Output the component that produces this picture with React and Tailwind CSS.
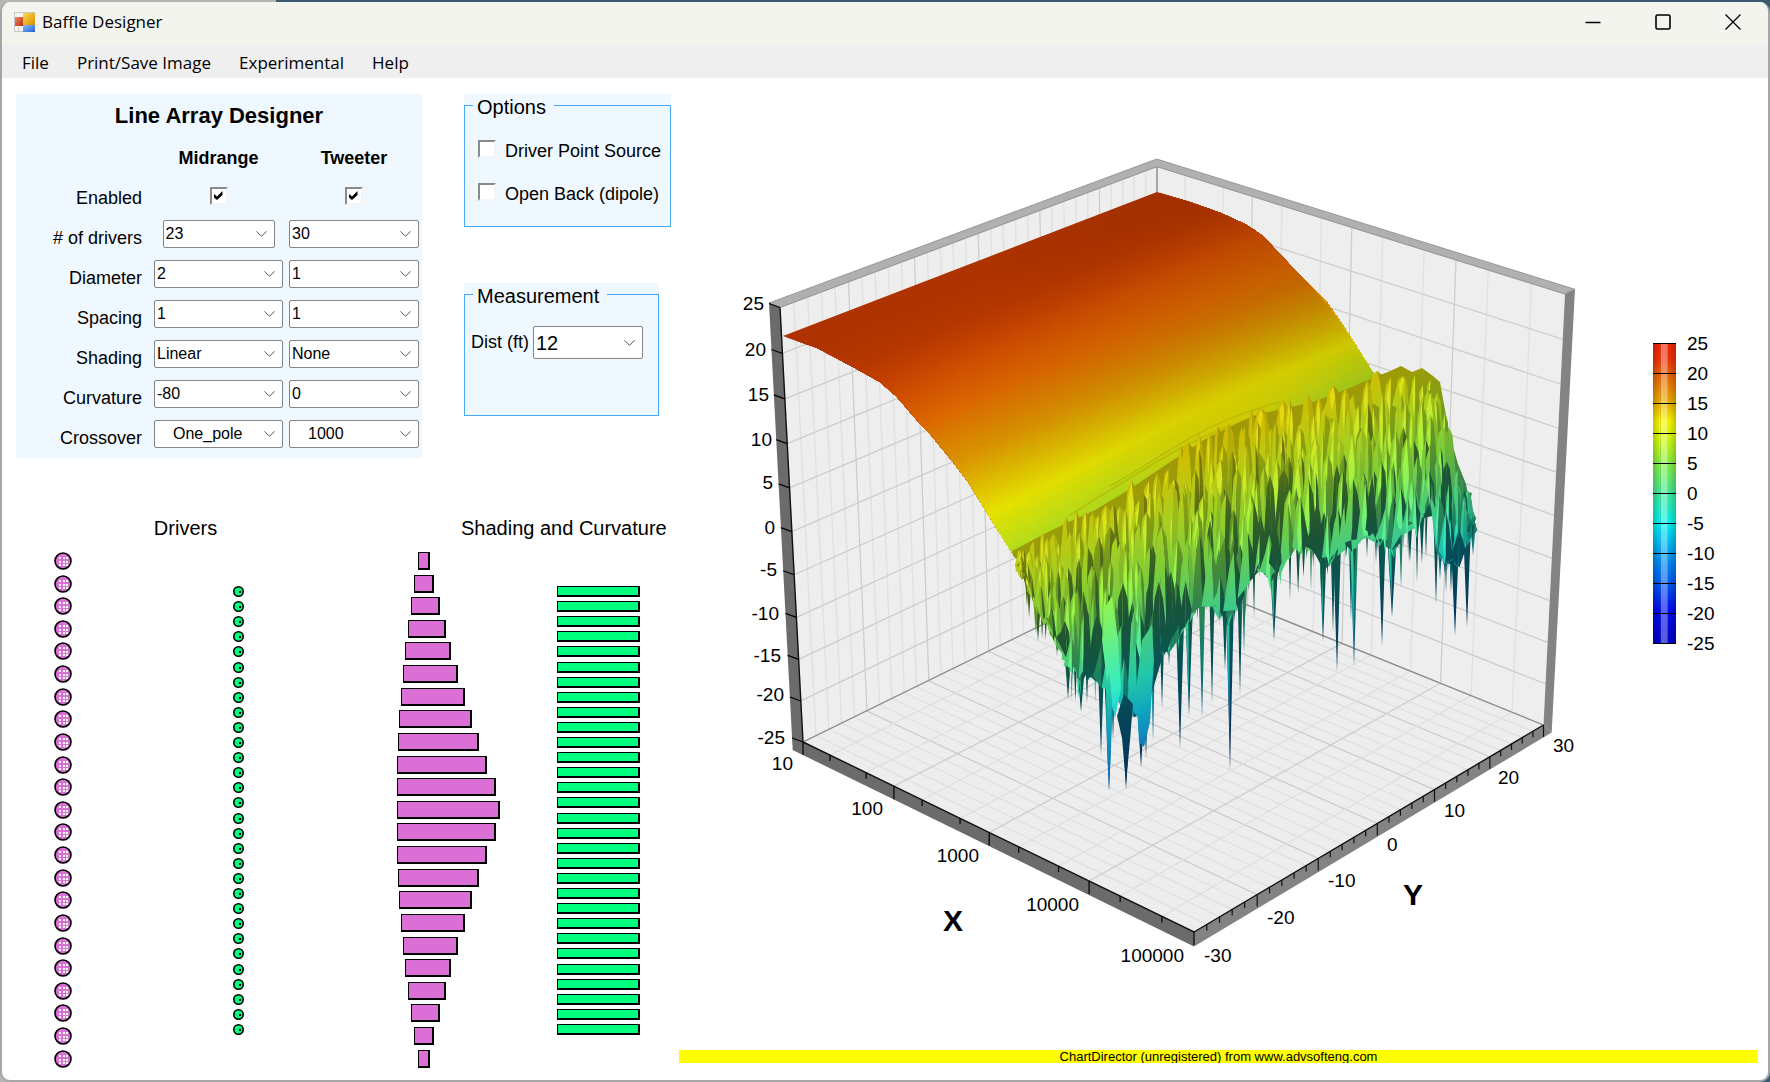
import React from "react";

const MENU = ["File", "Print/Save Image", "Experimental", "Help"];

const ROWS = [
  { label: "# of drivers", mid: "23", tweet: "30", narrow: true },
  { label: "Diameter", mid: "2", tweet: "1" },
  { label: "Spacing", mid: "1", tweet: "1" },
  { label: "Shading", mid: "Linear", tweet: "None" },
  { label: "Curvature", mid: "-80", tweet: "0" },
  { label: "Crossover", mid: "One_pole", tweet: "1000", indent: true },
];

/* ---------- form controls ---------- */

const Combo = ({ value, label, id, className = "w-full h-7 text-[16px]", pad = "pl-[2px]" }) => (
  <div className={`relative ${className}`}>
    <select
      id={id}
      aria-label={label}
      defaultValue={value}
      className={`block w-full h-full appearance-none rounded-[2px] border border-[#858585] bg-white text-black ${pad}`}
    >
      <option>{value}</option>
    </select>
    <svg
      className="pointer-events-none absolute right-2 top-1/2 -translate-y-1/2"
      width="11"
      height="7"
      viewBox="0 0 11 7"
      fill="none"
      stroke="#555"
    >
      <path d="M0.5 0.8 L5.5 5.8 L10.5 0.8" />
    </svg>
  </div>
);

const Check = ({ id, label, checked = false }) => (
  <span className="relative block h-[18px] w-[18px] shrink-0">
    <input
      id={id}
      type="checkbox"
      aria-label={label}
      defaultChecked={checked}
      className="peer block h-full w-full appearance-none border-2 border-t-[#8a8a8a] border-l-[#8a8a8a] border-r-[#f4f4f4] border-b-[#f4f4f4] bg-white"
    />
    <svg
      className="pointer-events-none absolute left-1 top-1 hidden peer-checked:block"
      width="9"
      height="9"
      viewBox="0 0 9 9"
    >
      <path d="M0 3 L3 5.5 L8.5 0 V4 L3 9 L0 6.5 Z" />
    </svg>
  </span>
);

const GroupBox = ({ title, className, children }) => (
  <div className={`bg-[#f0f8ff] ${className}`}>
    <fieldset className="h-full border border-[#49a8f7] px-2">
      <legend className="h-[22px] pl-1 pr-2 text-[20px] leading-[26px]">{title}</legend>
      {children}
    </fieldset>
  </div>
);

const LineArrayPanel = () => (
  <section className="w-[406px] bg-[#f0f8ff] text-[18px]">
    <h1 className="h-11 text-center text-[22px] leading-[44px] font-bold">Line Array Designer</h1>
    <div className="grid grid-cols-[132px_129px_130px] auto-rows-[40px] gap-x-[6px] items-center">
      <span />
      <h2 className="text-center font-bold">Midrange</h2>
      <h2 className="text-center font-bold">Tweeter</h2>
      <span className="pr-[6px] text-right">Enabled</span>
      <div className="flex justify-center pb-1">
        <Check label="Midrange enabled" checked />
      </div>
      <div className="flex justify-center pb-1">
        <Check label="Tweeter enabled" checked />
      </div>
      {ROWS.map((r) => (
        <React.Fragment key={r.label}>
          <span className="pr-[6px] text-right">{r.label}</span>
          <div className="flex justify-center pb-2">
            <Combo
              value={r.mid}
              label={`${r.label} midrange`}
              className={r.narrow ? "w-28 h-7 text-[16px]" : "w-full h-7 text-[16px]"}
              pad={r.indent ? "pl-[18px]" : "pl-[2px]"}
            />
          </div>
          <div className="pb-2">
            <Combo value={r.tweet} label={`${r.label} tweeter`} pad={r.indent ? "pl-[18px]" : "pl-[2px]"} />
          </div>
        </React.Fragment>
      ))}
    </div>
  </section>
);

/* ---------- driver layout drawing ---------- */

const HALF = [
  [418, 430], [414, 434], [411, 440], [408, 446], [405, 451], [403, 458],
  [401, 465], [399, 472], [398, 479], [397, 487], [397, 496],
];
const MID_BARS = [...HALF, [397, 500], ...[...HALF].reverse()];

const Bar = ({ x, y, w, h, fill }) => (
  <g shapeRendering="crispEdges">
    <rect x={x} y={y} width={w} height={h} fill="#000" />
    <rect x={x + 1} y={y + 1} width={w - 3} height={h - 3} fill={fill} />
  </g>
);

const DriverDrawing = () => (
  <svg viewBox="2 540 677 530" className="block w-full">
    {MID_BARS.map(([x0, x1], i) => {
      const y = Math.round(561 + i * 22.62);
      return (
        <g key={i}>
          <circle cx="63" cy={y} r="8" fill="#da70d6" stroke="#000" strokeWidth="1.6" />
          <g shapeRendering="crispEdges" fill="#fff">
            {[-4, 0, 3].map((dx) =>
              [-4, 0, 3].map((dy) => <rect key={`${dx},${dy}`} x={63 + dx} y={y + dy} width="2" height="2" />)
            )}
          </g>
          <Bar x={x0} y={y - 9} w={x1 - x0} h={18} fill="#da70d6" />
        </g>
      );
    })}
    {Array.from({ length: 30 }, (_, i) => {
      const y = Math.round(591 + i * 15.1);
      return (
        <g key={i}>
          <circle cx="238.5" cy={y + 0.5} r="4.7" fill="#00ff7f" stroke="#000" strokeWidth="1.6" />
          <rect x="239" y={y} width="2" height="2" />
          <Bar x={557} y={y - 5} w={83} h={11} fill="#00ff7f" />
        </g>
      );
    })}
  </svg>
);

/* ---------- surface chart ---------- */

// projective map of the unit square onto four screen points
const plane = ([x0, y0], [x1, y1], [x2, y2], [x3, y3]) => {
  const dx1 = x1 - x2, dx2 = x3 - x2, sx = x0 - x1 + x2 - x3;
  const dy1 = y1 - y2, dy2 = y3 - y2, sy = y0 - y1 + y2 - y3;
  const den = dx1 * dy2 - dx2 * dy1;
  const g = (sx * dy2 - dx2 * sy) / den;
  const h = (dx1 * sy - sx * dy1) / den;
  return (u, v) => {
    const w = g * u + h * v + 1;
    return [
      ((x1 - x0 + g * x1) * u + (x3 - x0 + h * x3) * v + x0) / w,
      ((y1 - y0 + g * y1) * u + (y3 - y0 + h * y3) * v + y0) / w,
    ];
  };
};

const LEFT = [803, 742];
const FRONT = [1194, 932];
const RIGHT = [1543.5, 725];
const BACK = [1157, 568.5];
const LEFT_TOP = [780, 307.5];
const BACK_TOP = [1157, 166.5];
const RIGHT_TOP = [1565, 294];

const floor = plane(LEFT, FRONT, RIGHT, BACK);
const leftWall = plane(LEFT, BACK, BACK_TOP, LEFT_TOP);
const rightWall = plane(BACK, RIGHT, RIGHT_TOP, BACK_TOP);

const X_TICKS = [0, 1, 2, 3].flatMap((d) => [
  { u: d / 4, major: true },
  { u: (d + 0.30103) / 4 },
  { u: (d + 0.69897) / 4 },
]);
const Y_TICKS = Array.from({ length: 31 }, (_, i) => ({ u: i / 30, major: i % 5 === 0 }));
const Z_TICKS = Array.from({ length: 11 }, (_, i) => ({ u: i / 10, major: true }));

const pts = (list) => list.map((p) => `${p[0].toFixed(1)},${p[1].toFixed(1)}`).join(" ");

const Seg = ({ a, b, stroke, width = 1 }) => (
  <line x1={a[0]} y1={a[1]} x2={b[0]} y2={b[1]} stroke={stroke} strokeWidth={width} />
);

const gridColor = (t) => (t.major ? "#cdcdcd" : "#e0e0e0");

const Walls = () => (
  <g>
    <polygon points={pts([LEFT, FRONT, RIGHT, BACK])} fill="#ededed" />
    <polygon points={pts([LEFT, BACK, BACK_TOP, LEFT_TOP])} fill="#eeeeee" />
    <polygon points={pts([BACK, RIGHT, RIGHT_TOP, BACK_TOP])} fill="#eeeeee" />
    {Y_TICKS.map((t, i) => (
      <g key={i}>
        <Seg a={leftWall(t.u, 0)} b={leftWall(t.u, 1)} stroke={gridColor(t)} width={1.3} />
        <Seg a={floor(0, t.u)} b={floor(1, t.u)} stroke={gridColor(t)} width={1.3} />
      </g>
    ))}
    {X_TICKS.map((t, i) => (
      <g key={i}>
        <Seg a={rightWall(t.u, 0)} b={rightWall(t.u, 1)} stroke={gridColor(t)} width={1.3} />
        <Seg a={floor(t.u, 0)} b={floor(t.u, 1)} stroke={gridColor(t)} width={1.3} />
      </g>
    ))}
    {Z_TICKS.map((t, i) => (
      <g key={i}>
        <Seg a={leftWall(0, t.u)} b={leftWall(1, t.u)} stroke="#cdcdcd" width={1.3} />
        <Seg a={rightWall(0, t.u)} b={rightWall(1, t.u)} stroke="#cdcdcd" width={1.3} />
      </g>
    ))}
    <polyline points={pts([LEFT, BACK, RIGHT])} fill="none" stroke="#8c8c8c" strokeWidth="1.2" />
    <Seg a={BACK} b={BACK_TOP} stroke="#8c8c8c" width={1.2} />
  </g>
);

const Frame = () => (
  <g>
    <polygon points="769,303 1156.7,159 1575,289.3 1565,294 1157,166.7 780,307.5" fill="#b0b0b0" stroke="#8a8a8a" strokeWidth="0.8" />
    <polygon points="769,303 780,307.5 803,742 803,754 792.7,750" fill="#6b6b6b" />
    <polygon points="792.7,750 803,742 1194,932 1194,946.5" fill="#6b6b6b" />
    <polygon points="1194,932 1543.5,725 1551.7,732.5 1194,946.5" fill="#838383" />
    <polygon points="1565,294 1575,289.3 1551.7,732.5 1543.5,725" fill="#838383" />
    <polyline points={pts([LEFT_TOP, LEFT, FRONT, RIGHT])} fill="none" stroke="#111" strokeWidth="1.4" />
    {[...X_TICKS, { u: 1, major: true }].map((t, i) => {
      const p = floor(t.u, 0);
      return <Seg key={i} a={p} b={[p[0], p[1] + (t.major ? 13 : 6)]} stroke="#000" width={1.2} />;
    })}
    {Y_TICKS.slice(1).map((t, i) => {
      const p = floor(1, t.u);
      return <Seg key={i} a={p} b={[p[0], p[1] + (t.major ? 12 : 6)]} stroke="#111" width={1.2} />;
    })}
    {Z_TICKS.map((t, i) => {
      const p = leftWall(0, t.u);
      return <Seg key={i} a={p} b={[p[0] - 11, p[1] - 4]} stroke="#000" width={1.2} />;
    })}
  </g>
);

// edge profiles of the smooth sheet at y = -30 and y = 30, with the colour there
const PROFILE = [
  [783, 336, 1157, 192, 174, 51, 0],
  [817, 348, 1190, 202, 175, 52, 0],
  [853, 367, 1221, 213, 182, 56, 0],
  [880, 382, 1245, 224, 196, 66, 0],
  [897, 397, 1262, 235, 208, 80, 0],
  [920, 424, 1290, 265, 220, 104, 0],
  [930, 434, 1307, 282, 217, 118, 0],
  [953, 462, 1325, 300, 218, 148, 0],
  [968, 482, 1338, 318, 222, 180, 0],
  [987, 513, 1353, 341, 232, 228, 0],
  [1013, 554, 1377, 379, 178, 224, 32],
];

const STEPS = 100;
const STRIPS = Array.from({ length: STEPS + 1 }, (_, i) => {
  const f = (i / STEPS) * (PROFILE.length - 1);
  const k = Math.min(Math.floor(f), PROFILE.length - 2);
  return PROFILE[k].map((v, j) => v + (PROFILE[k + 1][j] - v) * (f - k));
});

const Sheet = () => (
  <g>
    {STRIPS.slice(0, -1).map((s, i) => {
      const edge = STRIPS.slice(i);
      const bump = (i / STEPS) * 16;
      const d =
        `M${s[0].toFixed(1)} ${s[1].toFixed(1)}` +
        `Q${((s[0] + s[2]) / 2 + bump).toFixed(1)} ${((s[1] + s[3]) / 2 - bump).toFixed(1)} ${s[2].toFixed(1)} ${s[3].toFixed(1)}` +
        edge.map((e) => `L${e[2].toFixed(1)} ${e[3].toFixed(1)}`).join("") +
        edge.reverse().map((e) => `L${e[0].toFixed(1)} ${e[1].toFixed(1)}`).join("") +
        "Z";
      return <path key={i} d={d} fill={`rgb(${s[4] | 0},${s[5] | 0},${s[6] | 0})`} />;
    })}
    <path
      d="M783 336L1157 192L1221 213L1252 228L1272 244L1307 282L1330 308L1353 341L1377 379L1013 554L968 482L920 424L880 382L817 348Z"
      fill="url(#sheetShade)"
    />
    <ellipse cx="1225" cy="420" rx="130" ry="36" fill="url(#sheetGlow)" transform="rotate(-25 1225 420)" />
    <path
      d="M1070 515C1100 496 1120 484 1160 460S1230 424 1290 406M1110 486C1140 470 1160 455 1190 438S1250 410 1280 402"
      fill="none"
      stroke="#a09c00"
      strokeOpacity="0.35"
      strokeWidth="1.5"
    />
  </g>
);

// outline of the ragged part
const TOP = [
  [1012, 551], [1048, 532], [1095, 510], [1130, 489], [1173, 460], [1207, 438], [1253, 416],
  [1313, 402], [1345, 390], [1377, 376], [1388, 372], [1401, 366], [1412, 372], [1422, 368], [1433, 376],
  [1440, 382], [1445, 410], [1450, 436], [1458, 464], [1466, 484], [1470, 505], [1476, 518],
];
const LOW = [
  [1013, 556], [1023, 564], [1033, 590], [1043, 610], [1063, 648], [1080, 668], [1093, 662],
  [1107, 676], [1120, 692], [1143, 712], [1150, 690], [1156, 640], [1167, 640], [1180, 620],
  [1200, 590], [1213, 596], [1230, 615], [1243, 580], [1256, 555], [1266, 557], [1275, 570],
  [1286, 543], [1300, 540], [1313, 535], [1326, 555], [1340, 535], [1356, 535], [1363, 520],
  [1375, 525], [1383, 530], [1393, 545], [1406, 520], [1423, 510], [1432, 480], [1437, 545],
  [1447, 550], [1456, 560], [1463, 540], [1470, 525], [1476, 519],
];
const TIPS = [
  [1027, 606, 4], [1038, 641, 7], [1057, 657, 5], [1068, 699, 8], [1081, 712, 9], [1087, 703, 4],
  [1101, 755, 5], [1109, 791, 7], [1113, 740, 4], [1126, 790, 8], [1141, 768, 7], [1146, 758, 4],
  [1153, 742, 3], [1162, 708, 4], [1169, 665, 5], [1180, 748, 6], [1189, 716, 6], [1202, 718, 5],
  [1212, 703, 4], [1225, 670, 5], [1230, 771, 5], [1240, 695, 4], [1244, 653, 4], [1254, 618, 3],
  [1274, 641, 7], [1290, 601, 3], [1300, 560, 4], [1311, 591, 3], [1323, 642, 6], [1333, 633, 4],
  [1337, 672, 6], [1351, 620, 4], [1354, 666, 6], [1367, 558, 4], [1376, 563, 4], [1382, 646, 6],
  [1392, 617, 8], [1401, 588, 4], [1409, 562, 3], [1417, 583, 3], [1426, 558, 4], [1436, 605, 4],
  [1440, 580, 6], [1446, 593, 3], [1451, 592, 4], [1455, 636, 6], [1467, 627, 5], [1473, 555, 3],
];

const at = (table, x) => {
  const i = table.findIndex((p) => p[0] >= x);
  if (i <= 0) return i === 0 ? table[0][1] : table[table.length - 1][1];
  const [a, b] = [table[i - 1], table[i]];
  return a[1] + ((b[1] - a[1]) * (x - a[0])) / (b[0] - a[0]);
};

const random = (seed) => () => (seed = (seed * 16807) % 2147483647) / 2147483647;

// icicles hanging under the ragged edge
const buildSpikes = () => {
  const rnd = random(77);
  const out = [];
  TIPS.forEach(([x, y, w], i) => {
    out.push({
      x, y, w,
      base: Math.max(at(TOP, x) + 12, at(LOW, x) - 60),
      fill: i % 5 === 2 ? "url(#zShade)" : "url(#zDark)",
    });
  });
  for (let x = 1026; x < 1472; x += 3 + rnd() * 4) {
    const low = at(LOW, x);
    out.push({
      x,
      y: low + 6 + rnd() * rnd() * 60,
      w: 3 + rnd() * 4,
      base: Math.max(at(TOP, x) + 12, low - 70),
      fill: rnd() < 0.55 ? "url(#zDark)" : rnd() < 0.5 ? "url(#zShade)" : "url(#zLit)",
    });
  }
  return out;
};
const SPIKES = buildSpikes();

// overlapping facets, painted from the far rows to the near ones
const buildPeaks = () => {
  const rnd = random(4242);
  const out = [];
  const rows = 8;
  for (let r = 0; r < rows; r++) {
    const v = r / rows;
    for (let x = 1019 + rnd() * 6; x < 1473; x += 6 + rnd() * 8) {
      const top = at(TOP, x);
      const low = at(LOW, x);
      const room = Math.min(1, (x - 1010) / 80, (1476 - x) / 40);
      const y = Math.max(top - 9 * room, top + v * (low - top) * 0.84 + (rnd() - 0.5) * 36 * room);
      const w = (5 + rnd() * 6) * (0.5 + 0.5 * room);
      const h = (28 + rnd() * 50 + v * 75) * (0.4 + 0.6 * room);
      const cut = (px, py) => [px, Math.min(py, Math.max(at(LOW, px) + rnd() * 18, y + 4))];
      const lean = (rnd() - 0.35) * w;
      const dark = rnd() < v * 0.42;
      const a = [x - w * 0.45, y + h * 0.14];
      const b = [x + w * 0.45, y + h * 0.14];
      const keel = [x + lean / 2, y + h * 0.4];
      const foot = cut(x + lean, y + h * 1.3);
      out.push({
        fill: dark ? (rnd() < 0.5 ? "url(#zDark)" : "url(#zShade)") : "url(#zLit)",
        p: [[x, y], a, cut(x - w, y + h), foot, keel],
      });
      out.push({
        fill: dark || rnd() < v * 0.35 ? "url(#zDark)" : rnd() < 0.5 ? "url(#zMid)" : "url(#zShade)",
        p: [[x, y], keel, foot, cut(x + w, y + h), b],
      });
      // bright ridge on the lit side
      if (!dark && rnd() < 0.6) {
        out.push({
          fill: "url(#zBright)",
          p: [[x, y + 1], [x - w * 0.4, y + h * 0.3], [x - w * 0.2, Math.min(y + h * 0.9, foot[1])], keel],
        });
      }
    }
  }
  return out;
};
const PEAKS = buildPeaks();

const Ragged = () => (
  <g>
    {SPIKES.map(({ x, y, w, base, fill }, i) => (
      <g key={i}>
        <polygon
          points={pts([[x - w, base], [x + w, base], [x + w * 0.5, (base + y) / 2], [x, y], [x - w * 0.5, (base + y) / 2]])}
          fill={fill}
        />
        {i % 4 === 0 && <polygon points={pts([[x - w, base], [x - w * 0.2, base], [x, y - 14]])} fill="url(#zLit)" />}
      </g>
    ))}
    <polygon points={pts([...TOP, ...[...LOW].reverse()])} fill="url(#zShade)" />
    {PEAKS.map((k, i) => (
      <polygon key={i} points={pts(k.p)} fill={k.fill} />
    ))}
    <polygon points="1102,640 1106,606 1112,596 1118,640 1121,688 1115,718 1108,690" fill="url(#zBright)" />
    <polygon points="1136,690 1142,640 1152,625 1154,660 1150,722 1144,747 1139,742" fill="url(#zLit)" />
    <polygon points="1117,716 1124,694 1133,704 1130,740 1126,784 1122,738" fill="url(#zDark)" />
    <polygon points="1106,690 1109,672 1112,700 1111,750 1109,790 1107,750" fill="url(#zLit)" />
  </g>
);

const ramp = (id, stops) => (
  <linearGradient id={id} gradientUnits="userSpaceOnUse" x1="1013" y1="493" x2="1183" y2="878">
    {stops.map(([o, c]) => (
      <stop key={o} offset={o} stopColor={c} />
    ))}
  </linearGradient>
);

const Z_LABELS = [
  [25, 764, 303], [20, 766, 349], [15, 769, 394], [10, 772, 439], [5, 773, 482], [0, 775, 527],
  [-5, 777, 569], [-10, 779, 613], [-15, 781, 655], [-20, 784, 694], [-25, 785, 737],
];
const X_LABELS = [[10, 793, 763], [100, 883, 808], [1000, 979, 855], [10000, 1079, 904], [100000, 1184, 955]];
const Y_LABELS = [[-30, 1204, 955], [-20, 1267, 917], [-10, 1328, 880], [0, 1387, 844], [10, 1444, 810], [20, 1498, 777], [30, 1553, 745]];

const SurfaceChart = () => (
  <svg viewBox="679 78 1079 972" className="block w-full" fontSize="19">
    <defs>
      {ramp("zBright", [[0, "#e8cc10"], [0.1, "#e4dc10"], [0.2, "#ccea28"], [0.32, "#98f448"], [0.42, "#64f088"], [0.52, "#34ecc4"], [0.6, "#18c8dc"], [0.72, "#0a80d0"], [1, "#0a2890"]])}
      {ramp("zLit", [[0, "#d4ac00"], [0.1, "#ccc006"], [0.2, "#acce1c"], [0.32, "#78cc3c"], [0.42, "#4ccc78"], [0.52, "#22c8a8"], [0.6, "#10a4c0"], [0.72, "#0a64b8"], [1, "#0a1c80"]])}
      {ramp("zMid", [[0, "#bc9c00"], [0.12, "#b4b008"], [0.22, "#98bc1c"], [0.34, "#64b43c"], [0.44, "#3cac6c"], [0.54, "#189c90"], [0.64, "#087c98"], [0.75, "#065490"], [1, "#04105c"]])}
      {ramp("zShade", [[0, "#a89000"], [0.12, "#9c9c08"], [0.22, "#7c9c18"], [0.34, "#4c8c34"], [0.44, "#2a8454"], [0.54, "#107c70"], [0.64, "#086080"], [0.75, "#064074"], [1, "#04105c"]])}
      {ramp("zDark", [[0, "#8c7c08"], [0.16, "#74780c"], [0.26, "#3c6420"], [0.38, "#1c5434"], [0.5, "#085454"], [0.66, "#043c5c"], [1, "#020c48"]])}
      <linearGradient id="sheetShade" x1="0" x2="1">
        <stop offset="0.3" stopColor="#000" stopOpacity="0" />
        <stop offset="1" stopColor="#000" stopOpacity="0.13" />
      </linearGradient>
      <radialGradient id="sheetGlow">
        <stop offset="0" stopColor="#d8c800" stopOpacity="0.75" />
        <stop offset="1" stopColor="#d8c800" stopOpacity="0" />
      </radialGradient>
      <linearGradient id="legend" x1="0" y1="0" x2="0" y2="1">
        <stop offset="0" stopColor="#f02808" />
        <stop offset="0.05" stopColor="#ee3008" />
        <stop offset="0.1" stopColor="#e85c08" />
        <stop offset="0.2" stopColor="#eab000" />
        <stop offset="0.26" stopColor="#f8f400" />
        <stop offset="0.32" stopColor="#d0f810" />
        <stop offset="0.4" stopColor="#84ee40" />
        <stop offset="0.5" stopColor="#40e898" />
        <stop offset="0.6" stopColor="#00f0f0" />
        <stop offset="0.7" stopColor="#009cf0" />
        <stop offset="0.8" stopColor="#0058f0" />
        <stop offset="0.88" stopColor="#0010f0" />
        <stop offset="1" stopColor="#0000c4" />
      </linearGradient>
      <linearGradient id="gloss" x1="0" x2="1">
        <stop offset="0" stopColor="#000" stopOpacity="0.2" />
        <stop offset="0.3" stopColor="#000" stopOpacity="0" />
        <stop offset="0.36" stopColor="#fff" stopOpacity="0.35" />
        <stop offset="0.62" stopColor="#fff" stopOpacity="0.35" />
        <stop offset="0.68" stopColor="#000" stopOpacity="0" />
        <stop offset="1" stopColor="#000" stopOpacity="0.2" />
      </linearGradient>
    </defs>

    <Walls />
    <Frame />
    <Sheet />
    <Ragged />

    {[...Z_LABELS, ...X_LABELS].map(([t, x, y]) => (
      <text key={`${t},${x}`} x={x} y={y + 7} textAnchor="end">{t}</text>
    ))}
    {Y_LABELS.map(([t, x, y]) => (
      <text key={t} x={x} y={y + 7}>{t}</text>
    ))}
    <g fontSize="30" fontWeight="bold" textAnchor="middle">
      <text x="953" y="931">X</text>
      <text x="1413" y="905">Y</text>
    </g>

    {/* colour scale */}
    <rect x="1653" y="343" width="23" height="301" fill="url(#legend)" />
    <rect x="1653" y="343" width="23" height="301" fill="url(#gloss)" />
    {Z_TICKS.map((t, i) => (
      <g key={i}>
        <rect x="1653" y={343 + i * 30} width="23" height="1" />
        <text x="1687" y={350 + i * 30}>{25 - i * 5}</text>
      </g>
    ))}
  </svg>
);

/* ---------- window ---------- */

const AppIcon = () => (
  <svg width="22" height="21" viewBox="0 0 22 21">
    <defs>
      <linearGradient id="icoY" x1="0" y1="0" x2="1" y2="1">
        <stop offset="0" stopColor="#fbd84e" />
        <stop offset="1" stopColor="#d99000" />
      </linearGradient>
      <linearGradient id="icoR" x1="0" y1="0" x2="1" y2="1">
        <stop offset="0" stopColor="#f08a60" />
        <stop offset="1" stopColor="#b82c10" />
      </linearGradient>
      <linearGradient id="icoB" x1="0" y1="0" x2="1" y2="1">
        <stop offset="0" stopColor="#8abcf8" />
        <stop offset="1" stopColor="#2060d8" />
      </linearGradient>
    </defs>
    <rect x="0.5" y="0.5" width="20" height="19" fill="#f4f4f4" stroke="#c4c8cc" />
    <path d="M4.5 15V20" stroke="#c4c8cc" />
    <rect x="1" y="5" width="8" height="9" fill="url(#icoR)" />
    <rect x="9" y="1" width="12" height="12" fill="url(#icoY)" />
    <rect x="9" y="13" width="12" height="7" fill="url(#icoB)" />
  </svg>
);

const WinButton = ({ label, children }) => (
  <button aria-label={label} className="flex h-full w-[70px] items-center justify-center">
    <svg width="16" height="16" viewBox="0 0 16 16" fill="none" stroke="#000" strokeWidth="1.3">
      {children}
    </svg>
  </button>
);

export default function App() {
  return (
    <div className="flex min-h-screen flex-col bg-[linear-gradient(90deg,#b4b4b4_276px,#3d5a73_276px)] pt-[2px] font-['Liberation_Sans',Arial,sans-serif] text-black">
      <div className="flex grow flex-col overflow-hidden rounded-[10px] border-x-2 border-b-2 border-[#a6a6a6] bg-white">
        <header className="flex h-[43px] items-center bg-[#f3f4ee] pl-3 pb-[3px] font-['Open_Sans','Noto_Sans',sans-serif] text-[17px]">
          <AppIcon />
          <span className="ml-[6px]">Baffle Designer</span>
          <div className="ml-auto flex h-full">
            <WinButton label="Minimize">
              <path d="M0.5 8.5H15.5" />
            </WinButton>
            <WinButton label="Maximize">
              <rect x="1" y="1" width="14" height="14" rx="1.5" strokeWidth="1.6" />
            </WinButton>
            <WinButton label="Close">
              <path d="M0.5 0.5 L15.5 15.5 M15.5 0.5 L0.5 15.5" />
            </WinButton>
          </div>
        </header>
        <nav className="flex h-[33px] items-center gap-7 bg-[#efefef] pl-5 pt-[2px] font-['Open_Sans','Noto_Sans',sans-serif] text-[17px]">
          {MENU.map((m) => (
            <button key={m}>{m}</button>
          ))}
        </nav>

        <main className="flex items-start">
          <div className="w-[677px] shrink-0">
            <div className="flex items-start pl-[14px] pt-4">
              <LineArrayPanel />
              <div className="ml-[42px] flex flex-col gap-14">
                <GroupBox title="Options" className="h-[133px] w-[207px]">
                  <div className="flex flex-col gap-[21px] pl-[5px] pt-6 text-[18px] leading-[22px]">
                    <div className="flex gap-[9px]">
                      <Check id="point" label="Driver Point Source" />
                      <label htmlFor="point" className="whitespace-nowrap">Driver Point Source</label>
                    </div>
                    <div className="flex gap-[9px]">
                      <Check id="open" label="Open Back (dipole)" />
                      <label htmlFor="open" className="whitespace-nowrap">Open Back (dipole)</label>
                    </div>
                  </div>
                </GroupBox>
                <GroupBox title="Measurement" className="h-[133px] w-[195px]">
                  <div className="flex items-center pt-[21px] text-[18px]">
                    <label htmlFor="dist" className="w-[60px] -ml-[2px] mr-[2px] whitespace-nowrap">Dist (ft)</label>
                    <Combo id="dist" label="Dist (ft)" value="12" className="h-[33px] w-[110px] text-[20px]" />
                  </div>
                </GroupBox>
              </div>
            </div>
            <div className="flex pt-[58px] text-[20px] leading-6">
              <h2 className="w-[367px] text-center">Drivers</h2>
              <h2 className="pl-[92px]">Shading and Curvature</h2>
            </div>
            <DriverDrawing />
          </div>

          <div className="mr-[10px] min-w-0 grow">
            <SurfaceChart />
            <footer className="overflow-hidden bg-[#ffff00] text-center text-[13px] leading-[13px]">
              ChartDirector (unregistered) from www.advsofteng.com
            </footer>
          </div>
        </main>
      </div>
    </div>
  );
}
